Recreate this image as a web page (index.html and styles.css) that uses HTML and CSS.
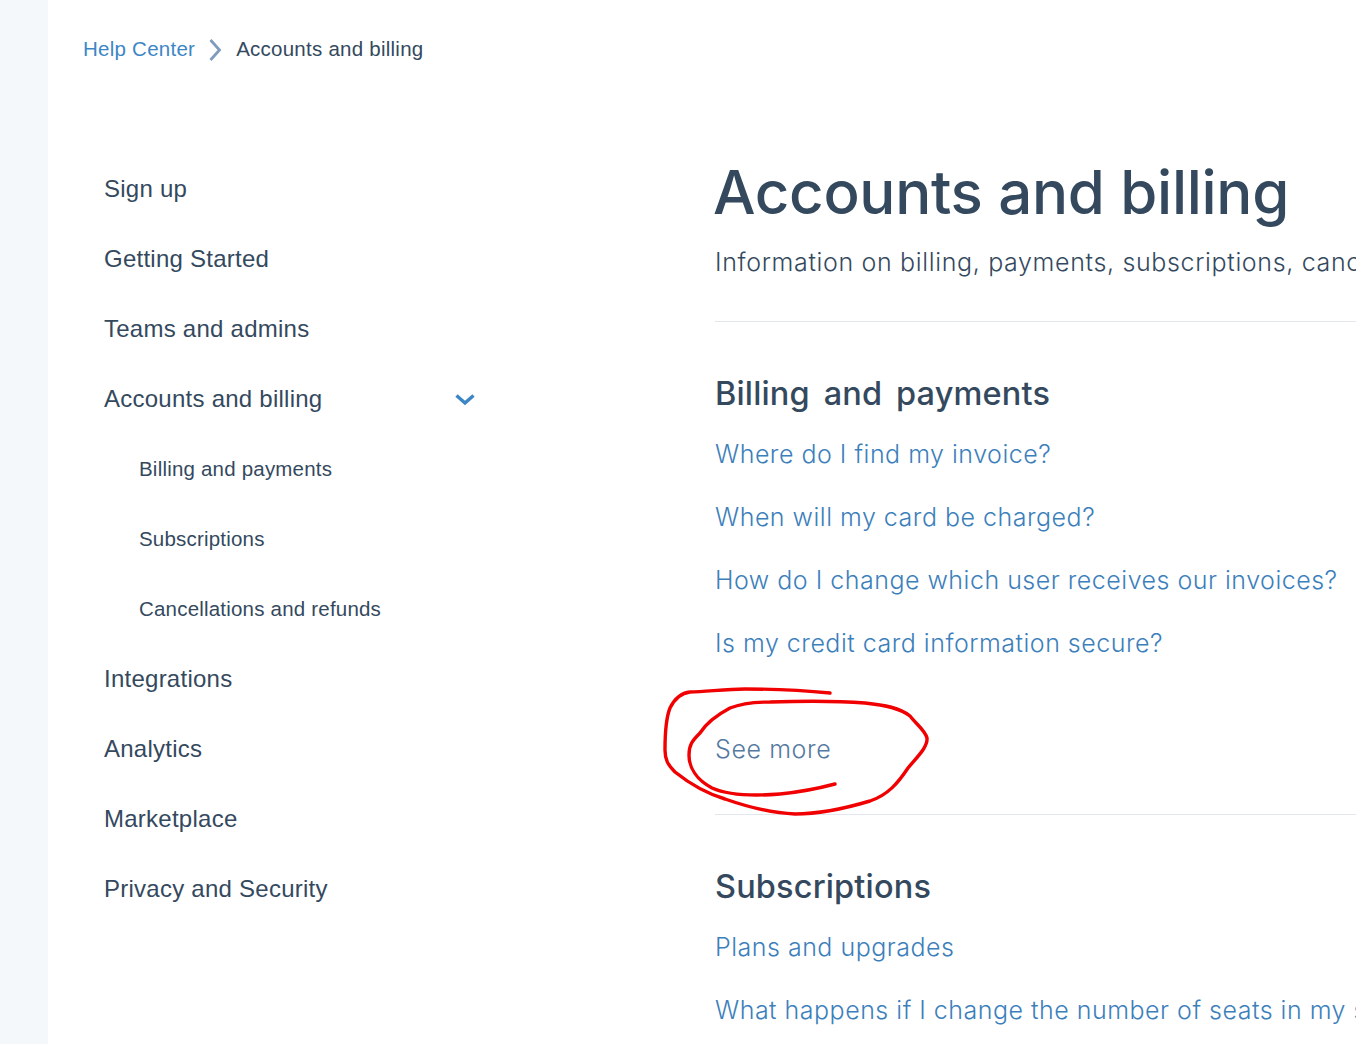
FILE: index.html
```html
<!DOCTYPE html>
<html lang="en">
<head>
<meta charset="utf-8">
<title>Accounts and billing</title>
<link rel="stylesheet" href="styles.css">
</head>
<body>
<div class="page">
  <div class="strip"></div>
  <main class="main">
    <nav class="crumbs">
      <a class="crumb-link" href="#">Help Center</a>
      <svg class="crumb-sep" width="14" height="24" viewBox="0 0 14 24"><path d="M2.5 2 L11.5 12 L2.5 22" fill="none" stroke="#7f9cbd" stroke-width="2.8"/></svg>
      <span class="crumb-current">Accounts and billing</span>
    </nav>
    <div class="columns">
      <aside class="side">
        <a class="side-item" href="#">Sign up</a>
        <a class="side-item" href="#">Getting Started</a>
        <a class="side-item" href="#">Teams and admins</a>
        <a class="side-item side-open" href="#">Accounts and billing
          <svg class="chev" width="22" height="14" viewBox="0 0 22 14"><path d="M2.5 3.5 L11 11 L19.5 3.5" fill="none" stroke="#3d86c6" stroke-width="3.4"/></svg>
        </a>
        <a class="side-sub" href="#">Billing and payments</a>
        <a class="side-sub" href="#">Subscriptions</a>
        <a class="side-sub" href="#">Cancellations and refunds</a>
        <a class="side-item" href="#">Integrations</a>
        <a class="side-item" href="#">Analytics</a>
        <a class="side-item" href="#">Marketplace</a>
        <a class="side-item" href="#">Privacy and Security</a>
      </aside>
      <section class="content">
        <h1 class="title">Accounts and billing</h1>
        <p class="lead">Information on billing, payments, subscriptions, cancellations and refunds</p>
        <div class="group">
          <h2 class="group-title">Billing and payments</h2>
          <a class="q" href="#">Where do I find my invoice?</a>
          <a class="q" href="#">When will my card be charged?</a>
          <a class="q" href="#">How do I change which user receives our invoices?</a>
          <a class="q" href="#">Is my credit card information secure?</a>
          <a class="more" href="#">See more</a>
        </div>
        <div class="group">
          <h2 class="group-title">Subscriptions</h2>
          <a class="q" href="#">Plans and upgrades</a>
          <a class="q" href="#">What happens if I change the number of seats in my subscription?</a>
        </div>
      </section>
    </div>
  </main>
  <svg class="scribble" width="300" height="160" viewBox="650 670 300 160"><path d="M830 693 C800 690 770 689 745 689 C725 689 705 692 690 692 C680 693 674 700 670 708 C666 718 665 735 665 750 C665 760 668 765 675 772 C690 784 705 793 725 799 C745 806 770 813 795 814 C820 814 850 807 870 801 C888 795 898 783 908 768 C917 757 928 747 927 738 C925 730 916 724 910 716 C900 708 885 705 865 703 C840 701 800 701 770 702 C755 702 740 704 730 708 C715 716 705 725 700 733 C692 741 689 745 689 755 C689 768 697 780 712 788 C730 796 755 796 780 794 C800 792 820 788 835 784" fill="none" stroke="#f00000" stroke-width="3.4" stroke-linecap="round" stroke-linejoin="round"/></svg>
</div>
</body>
</html>
```
FILE: styles.css
```css
* { box-sizing: border-box; }
html, body { margin: 0; height: 100%; overflow: hidden; background: #fff; }
a { text-decoration: none; }
.page { position: relative; display: flex; width: 1356px; height: 1044px; overflow: hidden; }
.strip { flex: 0 0 48px; background: #f4f8fb; }
.main { flex: 1; min-width: 0; font-family: "Liberation Sans", Arial, sans-serif; }

.crumbs { display: flex; align-items: center; height: 24px; margin: 37px 0 0 35px; font-size: 20.5px; letter-spacing: 0.25px; }
.crumb-link { color: #3d86c6; }
.crumb-sep { margin: 2px 14px 0 13px; }
.crumb-current { color: #34495e; }

.columns { display: flex; margin-top: 93px; }
.side { flex: 0 0 667px; padding-left: 56px; }
.side-item { display: flex; align-items: center; justify-content: space-between; width: 373px; height: 70px; padding-right: 1px; font-size: 24px; letter-spacing: 0.25px; color: #34495e; }
.side-sub { display: flex; align-items: center; height: 70px; padding-left: 35px; font-size: 20.5px; letter-spacing: 0.2px; color: #34495e; }

.content { flex: 0 0 auto; width: 900px; white-space: nowrap; font-family: Inter, sans-serif; }
.title { margin: 0 0 0 -2px; font-size: 60px; line-height: 76px; font-weight: 500; letter-spacing: -0.3px; color: #34495e; }
.lead { margin: 15px 0 0; font-size: 25px; line-height: 34px; font-weight: 300; letter-spacing: 0.65px; color: #34495e; }
.group { border-top: 1px solid #e3e6ee; margin-top: 42px; width: 700px; padding-top: 50px; }
.group + .group { margin-top: 0; }
.group-title { margin: 0 0 21px; font-size: 32.5px; line-height: 44px; font-weight: 500; letter-spacing: 0.15px; word-spacing: 5px; color: #34495e; }
.q { display: block; height: 63px; line-height: 34px; font-size: 25px; font-weight: 300; letter-spacing: 0.5px; color: #3d7fbb; }
.more { display: block; margin-top: 43px; height: 82px; line-height: 34px; font-size: 25px; font-weight: 300; letter-spacing: 0.6px; color: #55799f; }

.scribble { position: absolute; left: 650px; top: 670px; pointer-events: none; }
```
